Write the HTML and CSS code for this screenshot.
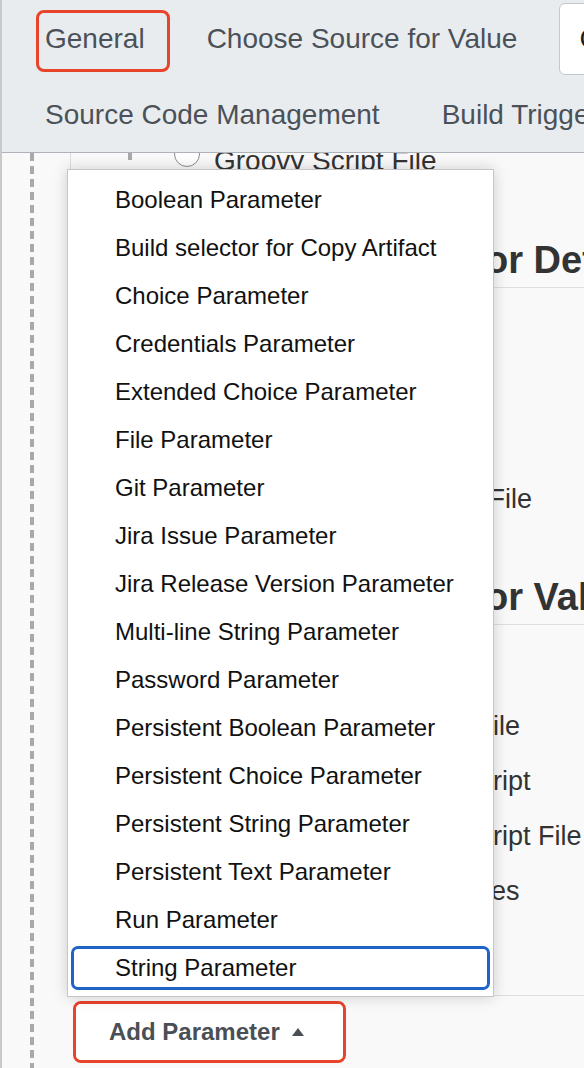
FILE: index.html
```html
<!DOCTYPE html>
<html lang="en">
<head>
<meta charset="utf-8">
<title>Add Parameter</title>
<link rel="stylesheet" href="styles.css">
</head>
<body>
<div class="page">
  <header class="tabbar">
    <div class="tabrow">
      <div class="tab">General<span class="annot"></span></div>
      <div class="tab">Choose Source for Value</div>
      <div class="tab active">Choose Source for Default Value</div>
    </div>
    <div class="tabrow">
      <div class="tab">Source Code Management</div>
      <div class="tab">Build Triggers</div>
      <div class="tab">Build Environment</div>
    </div>
  </header>

  <div class="content">
    <div class="rail"></div>
    <div class="main">
      <div class="cutrow">
        <span class="minirail"></span>
        <span class="radio"></span>
        <span class="label">Groovy Script File</span>
      </div>

      <h2 class="section-title">Choose Source for Default Value</h2>
      <div class="options default">
        <div class="opt"><span class="radio"></span><span class="opt-label">Value</span></div>
        <div class="opt"><span class="radio"></span><span class="opt-label">Script</span></div>
        <div class="opt"><span class="radio"></span><span class="opt-label">Groovy</span></div>
        <div class="opt"><span class="radio"></span><span class="opt-label">Property File</span></div>
      </div>

      <h2 class="section-title second">Choose Source for Value</h2>
      <div class="options value">
        <div class="opt"><span class="radio"></span><span class="opt-label">Value</span></div>
        <div class="opt"><span class="radio"></span><span class="opt-label">Property File</span></div>
        <div class="opt"><span class="radio"></span><span class="opt-label">Groovy Script</span></div>
        <div class="opt"><span class="radio"></span><span class="opt-label">Groovy Script File</span></div>
        <div class="opt"><span class="radio"></span><span class="opt-label">Enter Values</span></div>
      </div>

      <div class="divider"></div>
      <div class="btnrow">
        <div class="annot-btn">
          <button class="addbtn" type="button">Add Parameter<span class="caret"></span></button>
        </div>
      </div>
    </div>
  </div>

  <ul class="menu">
    <li class="menu-item">Boolean Parameter</li>
    <li class="menu-item">Build selector for Copy Artifact</li>
    <li class="menu-item">Choice Parameter</li>
    <li class="menu-item">Credentials Parameter</li>
    <li class="menu-item">Extended Choice Parameter</li>
    <li class="menu-item">File Parameter</li>
    <li class="menu-item">Git Parameter</li>
    <li class="menu-item">Jira Issue Parameter</li>
    <li class="menu-item">Jira Release Version Parameter</li>
    <li class="menu-item">Multi-line String Parameter</li>
    <li class="menu-item">Password Parameter</li>
    <li class="menu-item">Persistent Boolean Parameter</li>
    <li class="menu-item">Persistent Choice Parameter</li>
    <li class="menu-item">Persistent String Parameter</li>
    <li class="menu-item">Persistent Text Parameter</li>
    <li class="menu-item">Run Parameter</li>
    <li class="menu-item focused">String Parameter</li>
  </ul>
</div>
</body>
</html>
```

FILE: styles.css
```css
html, body {
  margin: 0;
  padding: 0;
}

body {
  font-family: "Liberation Sans", Arial, Helvetica, sans-serif;
  background: #f9f9f9;
}

.page {
  position: relative;
  height: 1068px;
  overflow: hidden;
  border-left: 2px solid #c9c9c9;
  background: #f9f9f9;
}

/* ---------- tab bar ---------- */
.tabbar {
  height: 153px;
  box-sizing: border-box;
  background: #e9ecef;
  border-bottom: 1px solid #adb3b9;
  padding: 3px 0 0 23px;
  display: flex;
  flex-direction: column;
  gap: 4px;
}

.tabrow {
  display: flex;
  gap: 22px;
  height: 72px;
  white-space: nowrap;
}

.tab {
  position: relative;
  flex: none;
  display: flex;
  align-items: center;
  padding: 0 20px;
  font-size: 28px;
  color: #4b5158;
}

.tab.active {
  background: #fff;
  border: 1px solid #c3c8cd;
  border-radius: 6px;
  padding: 0 19px;
  color: #1d1d1d;
}

.annot {
  position: absolute;
  left: 11px;
  top: 7px;
  width: 134px;
  height: 62px;
  box-sizing: border-box;
  border: 3px solid #e8432b;
  border-radius: 8px;
}

/* ---------- content ---------- */
.content {
  display: flex;
  height: 915px;
}

.rail {
  flex: none;
  width: 4px;
  margin-left: 28px;
  background: repeating-linear-gradient(to bottom, #a9a9a9 0 8px, transparent 8px 13px);
}

.main {
  flex: 1;
  min-width: 0;
  margin-left: 36px;
}

.cutrow {
  height: 16px;
  overflow: hidden;
  display: flex;
  align-items: flex-end;
  border-left: 1px solid #dcdcdc;
  padding-left: 57px;
}

.minirail {
  flex: none;
  align-self: flex-start;
  width: 4px;
  height: 7px;
  background: #a9a9a9;
}

.radio {
  flex: none;
  width: 26px;
  height: 26px;
  box-sizing: border-box;
  border: 1.5px solid #8c8c8c;
  border-radius: 50%;
  background: #fff;
}

.cutrow .radio {
  margin-left: 42px;
  margin-bottom: 2px;
}

.cutrow .label {
  margin-left: 14px;
  margin-bottom: -8px;
  font-size: 28px;
  line-height: 32px;
  color: #333;
  white-space: nowrap;
}

.section-title {
  margin: 69px 0 0 113px;
  padding-bottom: 5px;
  border-bottom: 1px solid #dedede;
  font-size: 38px;
  font-weight: bold;
  line-height: 44px;
  color: #333;
  white-space: nowrap;
}

.section-title.second {
  margin-top: 48px;
}

.options {
  margin-top: 19px;
}

.options.default {
  padding-left: 269px;
}

.options.value {
  padding-left: 257px;
}

.opt {
  height: 55px;
  display: flex;
  align-items: center;
  gap: 14px;
  font-size: 27px;
  color: #333;
  white-space: nowrap;
}

.divider {
  margin-top: 76px;
  border-top: 1px solid #dedede;
}

.btnrow {
  margin-top: 5px;
  margin-left: 3px;
}

.annot-btn {
  display: flex;
  width: 273px;
  height: 62px;
  box-sizing: border-box;
  border: 3px solid #e8432b;
  border-radius: 8px;
  background: #fff;
}

.addbtn {
  flex: 1;
  display: flex;
  align-items: center;
  margin: 0;
  padding: 0 0 0 33px;
  border: none;
  border-radius: 5px;
  background: #fff;
  font-family: inherit;
  font-size: 24px;
  font-weight: bold;
  color: #4a4f55;
  cursor: pointer;
}

.caret {
  width: 0;
  height: 0;
  margin-left: 12px;
  border-left: 6px solid transparent;
  border-right: 6px solid transparent;
  border-bottom: 8px solid #4a4f55;
}

/* ---------- dropdown menu ---------- */
.menu {
  position: absolute;
  left: 65px;
  top: 169px;
  width: 427px;
  box-sizing: border-box;
  margin: 0;
  padding: 6px 3px 4px;
  list-style: none;
  background: #fff;
  border: 1px solid #c6c6c6;
  box-shadow: 0 0 14px rgba(0, 0, 0, 0.18);
}

.menu-item {
  height: 48px;
  box-sizing: border-box;
  display: flex;
  align-items: center;
  padding-left: 44px;
  font-size: 24px;
  color: #111;
  white-space: nowrap;
}

.menu-item.focused {
  height: 44px;
  margin: 2px 0;
  padding-left: 41px;
  border: 3px solid #1f63c6;
  border-radius: 7px;
}
```
